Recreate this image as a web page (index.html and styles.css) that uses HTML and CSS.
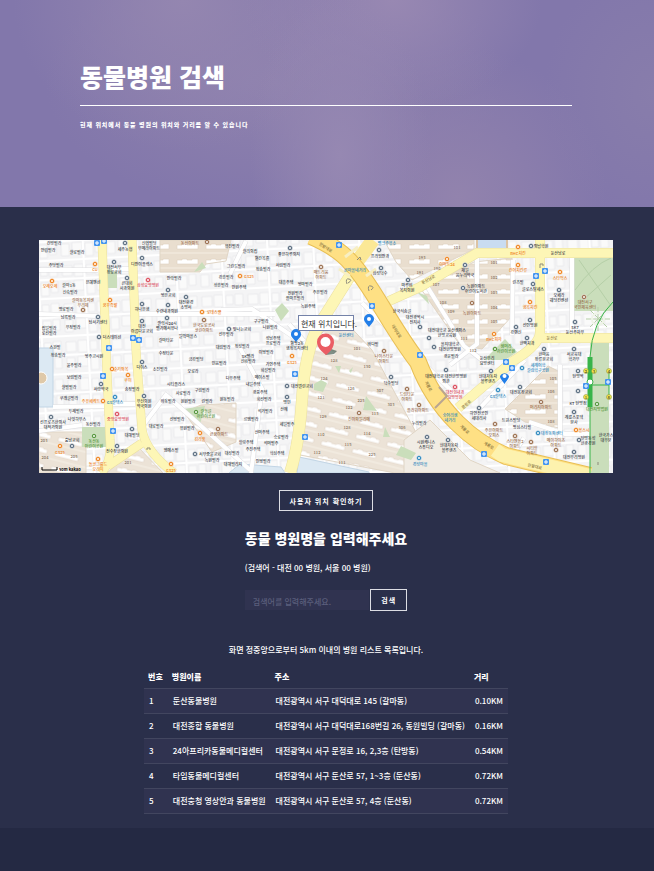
FILE: index.html
```html
<!DOCTYPE html>
<html lang="ko">
<head>
<meta charset="utf-8">
<meta name="viewport" content="width=device-width, initial-scale=1">
<title>동물병원 검색</title>
<link rel="stylesheet" href="styles.css">
</head>
<body>
<header class="banner">
  <h1>동물병원 검색</h1>
  <p>현재 위치에서 동물 병원의 위치와 거리를 알 수 있습니다</p>
</header>
<main class="content">
  <svg class="map" viewBox="39 240 574 233" role="img" aria-label="지도">
    <defs>
      <pattern id="homes" width="46" height="38" patternUnits="userSpaceOnUse" patternTransform="rotate(-3)">
        <rect width="46" height="38" fill="#f4f4f5"/>
        <path d="M2 3h10v10H2zM14 2h9v12h-9zM26 3h7v9h-7zM35 2h8v11h-8zM2 19h8v12H2zM13 18h10v10H13zM26 19h8v13h-8zM36 18h7v11h-7z" fill="#fafafa" stroke="#e4e4e7" stroke-width=".6"/>
        <path d="M0 16H46M24 0V38M0 35H46" stroke="#fff" stroke-width="2"/>
      </pattern>
      <pattern id="flats" width="32" height="15" patternUnits="userSpaceOnUse" patternTransform="rotate(14)">
        <rect width="32" height="15" fill="#ece3d7"/>
        <path d="M3 5h5V4h5v1h5V4h5v1h4v4H3z" fill="#fff" stroke="#dfd4c6" stroke-width=".6"/>
        <path d="M0 13H32" stroke="#f7f1e8"/>
      </pattern>
      <pattern id="flats2" width="29" height="15" patternUnits="userSpaceOnUse">
        <rect width="29" height="15" fill="#e9decf"/>
        <path d="M3 5h5V4h5v1h5V4h6v5H3z" fill="#fff" stroke="#ddd0bd" stroke-width=".6"/>
        <path d="M0 13H29" stroke="#f6efe4"/>
      </pattern>
    </defs>
    <rect x="39" y="240" width="574" height="233" fill="url(#homes)"/>
    <!-- apartment complexes -->
    <g stroke="#e0d5c5">
      <path d="M160 240H231L226 261 206 264 200 272H160z" fill="url(#flats2)"/>
      <path d="M330 322L342 318 372 350 420 440 418 473H395L300 455 304 400 310 350z" fill="url(#flats)"/>
      <path d="M384 240H474V249L412 280 396 262z" fill="url(#flats2)"/>
      <path d="M421 289L474 262 512 258 513 315 482 349 460 345z" fill="url(#flats2)"/>
      <path d="M505 409L548 366 560 372V428L525 422z" fill="url(#flats2)"/>
      <path d="M39 432H86V473H39zM107 473L137 446 163 473zM184 412L201 405 236 403V442L212 452z" fill="url(#flats)"/>
      <path d="M404 440L430 420 470 460 500 473H404z" fill="#f1ece4"/>
    </g>
    <!-- water -->
    <path d="M39 348H53V407H39zM229 473L240 464 281 467 285 473zM297 473L299 457 369 472V473z" fill="#dce9f3" stroke="#c2d5e5"/>
    <path d="M477 238H507V249H477z" fill="#c9dcf1" stroke="#dcc3a3" stroke-width="2"/>
    <circle cx="41" cy="378" r="6" fill="#dfc9a9" stroke="#fff"/>
    <!-- parks -->
    <g fill="#cadebb">
      <path d="M106 269H117V288H106zM82 427H106V447H82zM194 272L202 262 206 268zM275 310L282 303 289 311 281 321zM183 409L205 406 200 424zM590 337H609V473H590zM573 258H613V311H573z"/>
      <path d="M314 384L321 380 327 383 323 392 314 390zM335 366L341 366 339 373zM349 371L353 367 351 373zM366 396L377 411 363 410zM401 446L416 453 411 460 396 455zM385 427L390 437 383 437zM417 292L427 296 429 304zM494 350L505 339 517 352 505 360 484 360z"/>
    </g>
    <path d="M575 290Q593 265 611 258M579 260L611 306M575 307L611 275M586 319h24M598 307v24M590 310l17 17M607 310l-17 17" stroke="#b5cfa7" fill="none"/>
    <circle cx="598" cy="319" r="6" fill="none" stroke="#eff4e7" stroke-width="2"/>
    <!-- lanes -->
    <g fill="none" stroke="#dedee0" stroke-width="5">
      <path d="M39 270H98M39 314L98 316M112 269H130M139 314H275M110 404H135M53 407L110 406M230 274L246 241M39 431L82 425M221 310L252 309 298 340M240 348L262 389 251 473M144 424L166 395 200 425 250 470M362 303L466 405M425 283L464 346 482 360M477 256V344L450 365M513 260L512 335M560 365V440M529 422L565 434H590M524 438L505 466M572 256V336M478 410L525 360M304 341L289 324"/>
    </g>
    <g fill="none" stroke="#fff" stroke-width="4">
      <path d="M39 270H98M39 314L98 316M112 269H130M139 314H275M110 404H135M53 407L110 406M230 274L246 241M39 431L82 425M221 310L252 309 298 340M240 348L262 389 251 473M144 424L166 395 200 425 250 470M362 303L466 405M425 283L464 346 482 360M477 256V344L450 365M513 260L512 335M560 365V440M529 422L565 434H590M524 438L505 466M572 256V336M478 410L525 360M304 341L289 324"/>
    </g>
    <!-- yellow streets -->
    <g fill="none" stroke="#ebe0a0" stroke-width="9">
      <path d="M102 240L106 350 110 440Q112 462 101 473M132 240L136 350 142 430Q146 452 174 473M142 443L108 466"/>
      <path d="M389 301L420 287 477 253H613M540 240V332Q540 345 513 361L458 408M540 338H613" stroke-width="10"/>
      <path d="M355 268L319 325Q305 350 302 400 299 445 290 473" stroke-width="12"/>
    </g>
    <g fill="none" stroke="#fdf6b6" stroke-width="8">
      <path d="M102 240L106 350 110 440Q112 462 101 473M132 240L136 350 142 430Q146 452 174 473M142 443L108 466"/>
      <path d="M389 301L420 287 477 253H613M540 240V332Q540 345 513 361L458 408M540 338H613" stroke-width="9"/>
      <path d="M355 268L319 325Q305 350 302 400 299 445 290 473" stroke-width="11"/>
    </g>
    <!-- main avenue -->
    <path d="M373 240L353 267" fill="none" stroke="#fbe896" stroke-width="14"/>
    <path d="M311 236Q339 248 352 264C372 285 387 321 418 362 437 412 473 442 506 456L590 476" fill="none" stroke="#e8bf56" stroke-width="18"/>
    <path d="M311 236Q339 248 352 264C372 285 387 321 418 362 437 412 473 442 506 456L590 476" fill="none" stroke="#fee084" stroke-width="16"/>
    <path d="M495 450L502 455 590 476" fill="none" stroke="#fdf2ae" stroke-width="14"/>
    <path d="M345 257l13-10M366 276l10-7M350 276l-11-7" stroke="#f7efc4" stroke-width="3"/>
    <path d="M435 408L447 396 439 387" fill="none" stroke="#b9a591" stroke-width="2"/>
    <g fill="none" stroke="#8d8b7b"><path d="M347 284q-2-6 2-5t-1 4M369 291q-2-6 2-5t0 4M357 260l3-3 1 3M540 268v-4h3v2M147 450v-2h3v2M598 465v-3"/></g>
    <!-- subway -->
    <path d="M613 302Q592 322 590 357V473M592 385H609V371M609 385V397" fill="none" stroke="#38b44a"/>
    <path d="M590 357V407" stroke="#38b44a" stroke-width="5"/>
    <circle cx="590" cy="382" r="3" fill="#fff" stroke="#38b44a"/>
    <g id="labels"></g>
    <!-- hospital pins -->
    <g fill="#237fe8">
      <path d="M296 342C292 337 291 337 291 334A5 5 0 0 1 301 334C301 337 300 337 296 342zM369 327C365 322 364 321 364 319A5 5 0 0 1 374 319C374 321 373 322 369 327zM504.500 384C501 379 500 378 500 376A5 5 0 0 1 509 376C509 378 508 379 504.500 384z"/>
      <g fill="#fff"><circle cx="296" cy="334" r="2"/><circle cx="369" cy="319" r="2"/><circle cx="504.500" cy="376" r="2"/></g>
    </g>
    <!-- current position -->
    <path d="M325 355L331 349 337 351 334 354z" fill="#496052" opacity=".7"/>
    <path d="M326 355C321 351 317 347 317 342A8.500 8.500 0 0 1 334 342C334 347 331 351 326 355z" fill="#ea5d64"/>
    <circle cx="325.500" cy="342" r="5" fill="#fff"/>
    <rect x="298.500" y="315.500" width="55" height="15" fill="#fff" stroke="#7482a8"/>
    <text x="301" y="327" class="here">현재 위치입니다.</text>
    <path d="M42 467v3h15v-3" fill="none" stroke="#000"/>
    <text x="59" y="471" class="scale">50m kakao</text>
  </svg>

  <button class="outline locate" type="button">사용자 위치 확인하기</button>

  <form class="search">
    <h2><label for="keyword">동물 병원명을 입력해주세요</label></h2>
    <p>(검색어 - 대전 00 병원, 서울 00 병원)</p>
    <div class="search-row">
      <input id="keyword" type="text" placeholder="검색어를 입력해주세요.">
      <button class="outline" type="button">검색</button>
    </div>
  </form>

  <p class="note">화면 정중앙으로부터 5km 이내의 병원 리스트 목록입니다.</p>
  <table>
    <thead><tr><th>번호</th><th>병원이름</th><th>주소</th><th>거리</th></tr></thead>
    <tbody>
      <tr><td>1</td><td>둔산동물병원</td><td>대전광역시 서구 대덕대로 145 (갈마동)</td><td>0.10KM</td></tr>
      <tr><td>2</td><td>대전종합 동물병원</td><td>대전광역시 서구 대덕대로168번길 26, 동원빌딩 (갈마동)</td><td>0.16KM</td></tr>
      <tr><td>3</td><td>24아프리카동물메디컬센터</td><td>대전광역시 서구 문정로 16, 2,3층 (탄방동)</td><td>0.54KM</td></tr>
      <tr><td>4</td><td>타임동물메디컬센터</td><td>대전광역시 서구 둔산로 57, 1~3층 (둔산동)</td><td>0.72KM</td></tr>
      <tr><td>5</td><td>대전충청 영상안과 동물병원</td><td>대전광역시 서구 둔산로 57, 4층 (둔산동)</td><td>0.72KM</td></tr>
    </tbody>
  </table>
</main>
<script src="map.js"></script>
</body>
</html>
```
FILE: styles.css
```css
* { box-sizing: border-box; }

body {
  margin: 0;
  min-height: 100vh;
  background: #242943;
  color: #fff;
  font-family: "Noto Sans CJK KR", "Noto Sans", sans-serif;
  font-size: 8px;
  font-weight: 500;
  line-height: 12px;
}

h1, h2, p { margin: 0; }

.banner {
  padding: 58px 82px 77px 80px;
  background:
    radial-gradient(ellipse 90px 170px at 52% 75%, #9688b2, #9688b200),
    radial-gradient(ellipse 150px 110px at 60% 0%, #9888b2, #9888b200),
    radial-gradient(ellipse 170px 150px at 28% 0%, #9486b0, #9486b000),
    radial-gradient(ellipse 150px 150px at 70% 95%, #9283ad, #9283ad00),
    radial-gradient(ellipse 230px 130px at 42% 40%, #8f82ae, #8f82ae00),
    radial-gradient(ellipse 110px 130px at 100% 45%, #887dab, #887dab00),
    #8277ab;
}

.banner h1 {
  padding-bottom: 11px;
  border-bottom: 1px solid #fff;
  font-size: 25px;
  font-weight: 900;
  line-height: 36px;
}

.banner p {
  margin-top: 14px;
  font-size: 6px;
  font-weight: 900;
  letter-spacing: 0.15em;
  line-height: 10px;
}

.content {
  display: flex;
  flex-direction: column;
  align-items: center;
  padding: 33px 41px 14px 39px;
  background: #2a2f4a;
}

.map {
  display: block;
  width: 100%;
  height: auto;
  font-weight: 500;
}

.map .label {
  font-size: 4px;
  text-anchor: middle;
  dominant-baseline: central;
}

.map .here { font-size: 8px; font-weight: 400; fill: #333; }
.map .scale { font-size: 4px; font-weight: 700; fill: #000; }

.outline {
  height: 22px;
  padding: 0 10px;
  border: 1px solid #dcdde3;
  border-radius: 0;
  background: transparent;
  color: #fff;
  font-family: inherit;
  font-size: 7px;
  font-weight: 700;
  letter-spacing: 1px;
  line-height: 16px;
  white-space: nowrap;
}

.locate { height: 21px; margin-top: 17px; }

.search { margin-top: 16px; }
.search h2 { font-size: 14px; font-weight: 900; line-height: 22px; }
.search p { margin-top: 13px; }

.search-row {
  display: flex;
  align-items: center;
  gap: 1px;
  margin-top: 15px;
}

.search input {
  flex: 1;
  min-width: 0;
  height: 20px;
  padding: 2px 8px 0;
  border: 0;
  background: #303350;
  color: #fff;
  font: inherit;
}

.search input::placeholder { color: #5b5f7c; opacity: 1; }

.note { margin-top: 33px; }

table { margin-top: 10px; border-collapse: collapse; }

th, td { padding: 0 5px; text-align: left; white-space: nowrap; }
th { height: 22px; padding-left: 4px; font-weight: 900; }
td { height: 25px; border-top: 1px solid #42465f; border-bottom: 1px solid #42465f; }
tbody tr:nth-child(odd) { background: #303350; }
```
FILE: map.js
```js
// Place labels: x, y, text (lines split by |), kind, icon x, icon y
const places = [
  [54,243,"건양빌라"],[48,250,"연립빌라"],[77,252,"샬로빌라"],[56,265,"주당빌라"],
  [125,249,"세주농협","g",125,243],[149,243,"신협빌딩|부메라아파트"],[142,264,"디안이플렉스","g",142,258],
  [114,267,"대전서부|장로교회","g",114,262],[95,269,"CU","o",95,264],[50,286,"오레오레","o",52,281],
  [69,285,"갈마1동"],[93,282,"은혜맨션"],[127,283,"큰대회|사과의원","g",127,278],[148,285,"삼성요양병원","r",148,280],
  [70,292,"신숙빌라"],[83,300,"갈마동복지센|우리체","b",83,310],[110,305,"꿈꾸족발","o",110,300],
  [142,309,"하나은행","g",142,304],[66,309,"명로빌라"],[68,317,"남록빌라"],[98,322,"탐서기센터","g",98,317],
  [142,326,"대전|아름다운교회","g",142,321],[73,327,"우정빌라"],[49,328,"집일빌라|로선빌라"],
  [112,337,"더스테이션","g",99,337],[55,347,"스완빌"],[58,355,"청송빌라"],[94,356,"영주고시원"],
  [190,243,"동산아파트","b",207,242],[174,278,"안락빌라"],[168,295,"영은교회","g",168,290],
  [186,302,"대전환경|소방서","g",186,297],[167,311,"수련내과의원","g",168,305],[214,312,"로데스쿨","o",202,312],
  [204,325,"한국도로공사|코린아파트","b",204,320],[167,323,"갤럭시24시|벨가에서유나","g",167,318],
  [188,336,"밀박마을스"],[221,285,"상훈빌라"],[226,334,"선우빌라"],[166,340,"갈마타운"],[223,347,"대림빌라"],[166,353,"수정타운"],
  [232,246,"유진빌라"],[250,251,"샬리의집"],[262,258,"월간복흘"],[289,254,"좋은하루의지","g",290,248],
  [236,266,"그린드빌라"],[263,269,"청송빌라"],[283,265,"서림빌라"],[249,276,"GS25","o",240,276],
  [239,287,"반원주택"],[226,277,"강훈빌라"],[321,272,"매트리움|아파트","b",321,267],[286,282,"대흥주택"],[305,284,"영마빌라"],
  [320,292,"주은빌라"],[295,293,"전원빌라|플마프빌라"],[308,306,"녹원주택"],[261,321,"구구빌라"],[270,327,"나원빌라"],
  [242,329,"빛나는교회","g",229,329],[273,338,"성남주택|프로빌라"],[242,346,"청성빌라"],[266,352,"이영빌라"],[297,343,"월평2동|행정복지센터"],
  [355,270,"큰마을네거리","t"],[380,256,"프라임안과","g",379,250],[380,273,"삼성덕수","g",381,268],[407,285,"마루비|복지의원","g",408,280],
  [346,335,"둔산센터","t"],[373,344,"바다빌"],[384,356,"나이스타운|아파트","b",384,351],
  [387,243,"벨크주유소","t"],[402,311,"한국식송골"],[415,317,"대전광역시|전지사","g",420,327],
  [447,264,"이마트24","o",447,259],[465,270,"제일|음누리약국","g",465,265],[476,286,"녹원아파트|어린이도서관","g",463,288],
  [472,313,"녹원아파트","b",472,303],[518,253,"BHC치킨","o",518,247],[541,246,"외납학원","g",531,246],[558,253,"둔산남로"],
  [518,270,"건어치킨류","o",518,265],[560,278,"스타벅스","o",560,272],[518,282,"린즈빌"],[533,289,"글로스탈세스","g",533,284],
  [559,295,"오페라|웨딩컨벤션","g",559,290],[530,307,"행복치킨","o",530,302],[585,302,"대전서구|국민체육센터","b",584,297],
  [530,325,"선인병원","g",530,320],[516,332,"강앤신","g",516,327],[527,343,"한맥치과","g",527,338],[575,327,"SK7|둔산주차우","g",575,322],
  [494,339,"BHC피자","o",494,334],[447,330,"대전대학교 둔산캠퍼스|한방교육원","g",429,338],[450,344,"을지대학교|대전한방병원","g",434,347],
  [451,356,"광운빌라"],[506,346,"샘머리|어린이공원","e",495,349],[544,354,"한마음|장류온교회","g",544,349],[574,354,"서교육대|학가부","g",574,349],
  [74,365,"윤주빌라"],[74,377,"보림빌라"],[69,387,"샬빌빌라"],[69,398,"쿠래글빌라"],[76,411,"두레빌라"],[77,419,"나잇하우스"],
  [121,369,"순기와복","o",112,369],[128,380,"쿠이","o",128,375],[142,367,"다이스","g",142,362],[160,369,"소진빌라"],
  [101,389,"서랑약국","g",101,384],[132,389,"송정빌라"],[91,401,"주유페케트","o",103,401],[115,402,"GS칼텍스","t",115,397],
  [144,401,"우신의원|약국의원","g",144,396],[118,419,"중앙요양병원","r",117,414],[53,422,"선프로즈한의사|대적가의원","g",51,417],
  [93,424,"동산빌라"],[72,440,"충남교회","g",72,446],[94,441,"동산동|어린이공원","e",94,436],[132,435,"대해빌딩","g",132,429],
  [60,452,"GS25","o",60,446],[117,451,"전수장한의원","g",117,446],[98,464,"돌코그룸드|오리지","o",98,459],
  [156,426,"대로빌라"],[171,450,"엠에스빌"],[171,470,"GS25","o",171,464],[196,359,"금강빌딩"],[219,363,"민음빌라"],[193,371,"오로라"],
  [176,384,"시티플러스"],[183,393,"사로빌라"],[202,390,"구림빌라"],[168,401,"바동빌라"],[188,401,"원원빌라"],[207,401,"린빌라"],
  [206,411,"갈놀골|어린이공원","e",196,412],[177,419,"선영빌라"],[187,428,"유원빌라"],[219,434,"큰꿈아파트","b",218,429],[200,439,"김라풀","o",200,433],
  [210,454,"서부중문교회","g",195,454],[212,460,"녹원빌라"],[248,356,"SK텔라|신화빌라"],[273,364,"가연주택"],[268,370,"화설빌라"],
  [233,378,"다우주택"],[262,377,"메이스빌"],[253,384,"내일주택"],[260,392,"광풍주택"],[264,399,"회선빌라"],[302,386,"대전열린교회","g",287,386],
  [287,402,"명민","g",287,397],[227,399,"원동빌라"],[265,411,"석거빌라"],[284,409,"산예"],[251,419,"르엠빌라"],[287,424,"세일빌주"],
  [262,432,"산머주택"],[281,437,"승로빌라"],[246,442,"힐링주택"],[271,443,"석머빌주"],[253,449,"주진주택"],[277,453,"혁심주택"],
  [232,453,"대성빌라"],[263,461,"인영빌라"],[233,464,"대해빌리지"],[292,362,"GS25","o",292,356],[359,419,"진아파밀리에","b",359,413],
  [391,383,"덕수빌딩","g",391,377],[407,394,"드림타운|아파트","b",407,389],[418,410,"플라워아파트","b",419,405],[419,423,"누리빌라"],
  [446,376,"대전대학교 대전한방병원|외관","g",446,370],[455,392,"대전힘내과|요양병원","r",455,387],[450,415,"숭어리샘|네거리","t"],
  [426,442,"시원캐니스|스튜디오","g",427,437],[449,445,"현대자동차|블루핸즈","g",448,440],[420,464,"경성마을","t",419,458],
  [487,358,"둔산우리|요양센터"],[488,376,"현대자동차|블루핸즈","g",491,371],[538,365,"세계어학|갈람학구공원","t",522,368],[498,396,"GS칼텍스","t",498,390],
  [521,392,"대전봉장교회","g",520,387],[479,413,"하연전공인|세대리사","g",479,408],[541,407,"머리지아파트","b",541,402],
  [511,420,"트윈스빌딩"],[522,427,"평심스타빌"],[494,430,"주은아파트|오피스","b",495,424],[552,433,"대장동파센터","t",538,433],
  [515,441,"스타엔들2|아파트","b",515,436],[532,448,"씨티힐|아파트","b",531,442],[556,440,"메이하이츠|아파트","b",556,450],
  [574,417,"계룡스포텍|본사","g",574,412],[584,430,"볼스시","o",576,430],[588,438,"탄방동성|한광경원","g",579,440],[574,457,"대전우리병원","g",574,452],
  [578,403,"KT 탄방점","g",578,391],[578,376,"탄방역","g",578,371],[597,409,"대전지방법원","e",597,404],[606,435,"한국가스|대우본"]
];
const colors = { g: "#54687b", o: "#ee8018", r: "#d94656", b: "#976a48", e: "#4b9030", t: "#2584bc" };
const layer = document.getElementById("labels");
function add(name, attrs, text) {
  const node = document.createElementNS("http://www.w3.org/2000/svg", name);
  for (const key in attrs) node.setAttribute(key, attrs[key]);
  if (text) node.textContent = text;
  layer.append(node);
}
for (const [x, y, text, kind, ix, iy] of places) {
  const fill = kind && kind !== "g" ? colors[kind] : "#33383f";
  text.split("|").forEach((line, i) => add("text", { x, y: y + i * 5, fill, class: "label" }, line));
  if (ix) {
    add("circle", { cx: ix, cy: iy, r: 2.5, fill: colors[kind], stroke: "#fff", "stroke-width": 0.5 });
    add("circle", { cx: ix, cy: iy, r: 1, fill: "#fff" });
  }
}
// Bus stops
for (const [x, y] of [[97,243],[104,241],[133,338],[139,340],[109,348],[103,376],[113,431],[339,245],[372,306],[420,355],[295,374],[305,437],[545,271],[536,276],[506,362],[512,368],[484,454],[546,462],[586,386],[608,382]]) {
  add("rect", { x: x - 3, y: y - 3, width: 6, height: 6, rx: 1, fill: "#4595ef" });
  add("path", { d: `M${x - 1} ${y - 1}h2v2h-2z`, stroke: "#fff", fill: "none" });
}
// Subway exits
for (const [x, y, n] of [[586,371,"2"],[594,371,"3"],[609,371,"4"],[586,397,"1"],[609,397,"6"]]) {
  add("circle", { cx: x, cy: y, r: 2.5, fill: "#f6e94b", stroke: "#7e8a32", "stroke-width": 0.5 });
  add("text", { x, y, fill: "#333", class: "label" }, n);
}
// Building numbers
for (const [x, y, n] of [[457,247,101],[422,257,193],[437,268,190],[420,272,191],[436,284,107],[443,302,108],[451,311,109],[464,338,111],[473,350,112],[494,262,101],[494,277,102],[494,292,103],[494,307,104],[494,321,105],[324,378,124],[351,388,126],[321,397,121],[349,407,122],[375,413,113],[323,416,129],[347,427,128],[367,433,114],[321,434,110],[348,444,115],[372,454,225],[317,452,112],[342,462,111],[367,366,130],[380,390,307],[391,404,303],[402,427,306],[361,400,225],[553,378,105],[551,391,106],[551,421,108],[44,440,203],[45,457,204],[74,456,205],[128,462,201],[357,348,101],[334,360,128]]) {
  add("text", { x, y, fill: "#84705b", class: "label" }, String(n));
}
// Road names set along their streets
for (const [x, y, a, s] of [[326,247,32,"한밭대로"],[397,331,58,"대덕대로"],[428,279,-28,"둔산남로"],[429,386,62,"계룡로"],[465,429,45,"계룡로"],[489,445,30,"계룡로"],[535,466,14,"한밭대로"],[466,404,-42,"문정로"],[552,338,0,"둔산로"]]) {
  add("text", { x, y, fill: "#88733e", class: "label", transform: `rotate(${a} ${x} ${y})` }, s);
}
```
